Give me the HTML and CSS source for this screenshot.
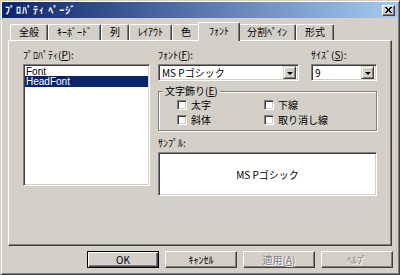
FILE: index.html
```html
<!DOCTYPE html>
<html lang="ja">
<head>
  <meta charset="UTF-8" />
  <title>ﾌﾟﾛﾊﾟﾃｨ ﾍﾟｰｼﾞ</title>
  <link rel="stylesheet" href="styles.css">
</head>
<body>

  <div class="window">
    <div class="titlebar">
      <span class="title">ﾌﾟﾛﾊﾟﾃｨ ﾍﾟｰｼﾞ</span>
      <span class="close-btn">
        <svg width="7" height="6" viewBox="0 0 7 6"><path d="M0 0 L6 6 M1 0 L7 6 M6 0 L0 6 M7 0 L1 6" stroke="#000" stroke-width="1" shape-rendering="crispEdges"/></svg>
      </span>
    </div>

    <div class="tabs">
      <div class="tab">全般</div>
      <div class="tab">ｷｰﾎﾞｰﾄﾞ</div>
      <div class="tab">列</div>
      <div class="tab">ﾚｲｱｳﾄ</div>
      <div class="tab">色</div>
      <div class="tab active">ﾌｫﾝﾄ</div>
      <div class="tab">分割ﾍﾟｲﾝ</div>
      <div class="tab">形式</div>
    </div>

    <div class="panel">
      <div class="col-left">
        <div class="label">ﾌﾟﾛﾊﾟﾃｨ(<u>P</u>):</div>
        <div class="listbox">
          <div class="list-item">Font</div>
          <div class="list-item selected">HeadFont</div>
        </div>
      </div>

      <div class="col-right">
        <div class="fields">
          <div class="field field-font">
            <div class="label">ﾌｫﾝﾄ(<u>F</u>):</div>
            <div class="combo">
              <span class="combo-text">MS Pゴシック</span>
              <span class="combo-btn"><span class="arrow"></span></span>
            </div>
          </div>
          <div class="field field-size">
            <div class="label">ｻｲｽﾞ(<u>S</u>):</div>
            <div class="combo">
              <span class="combo-text">9</span>
              <span class="combo-btn"><span class="arrow"></span></span>
            </div>
          </div>
        </div>

        <fieldset class="group">
          <legend>文字飾り(<u>E</u>)</legend>
          <div class="checks">
            <div class="check"><span class="check-box"></span>太字</div>
            <div class="check"><span class="check-box"></span>下線</div>
            <div class="check"><span class="check-box"></span>斜体</div>
            <div class="check"><span class="check-box"></span>取り消し線</div>
          </div>
        </fieldset>

        <div class="label sample-label">ｻﾝﾌﾟﾙ:</div>
        <div class="sample">MS Pゴシック</div>
      </div>
    </div>

    <div class="buttons">
      <button class="btn default">OK</button>
      <button class="btn">ｷｬﾝｾﾙ</button>
      <button class="btn disabled">適用(<u>A</u>)</button>
      <button class="btn disabled">ﾍﾙﾌﾟ</button>
    </div>
  </div>

</body>
</html>
```

FILE: styles.css
```css
body {
  margin: 0;
  background: #d4d0c8;
  font-family: "Noto Sans CJK JP", sans-serif;
  font-size: 10px;
  color: #000;
}

u {
  text-decoration: underline;
}

.window {
  width: 400px;
  height: 275px;
  box-sizing: border-box;
  border: 1px solid;
  border-color: #d4d0c8 #404040 #404040 #d4d0c8;
  box-shadow: inset 1px 1px #fff, inset -1px -1px #808080;
  padding: 1px;
  display: flex;
  flex-direction: column;
  background: #d4d0c8;
}

/* title bar */
.titlebar {
  height: 16px;
  flex-shrink: 0;
  background: linear-gradient(to right, #0a246a, #a6caf0);
  display: flex;
  align-items: center;
  justify-content: space-between;
  padding: 0 3px 0 3px;
  color: #fff;
  font-weight: bold;
  line-height: 12px;
}

.title {
  letter-spacing: 1px;
}

.close-btn {
  width: 13px;
  height: 11px;
  box-sizing: border-box;
  background: #d4d0c8;
  border: 1px solid;
  border-color: #fff #404040 #404040 #fff;
  box-shadow: inset -1px -1px #808080;
  display: flex;
  align-items: center;
  justify-content: center;
}

.close-btn svg {
  display: block;
}

/* tabs */
.tabs {
  display: flex;
  align-items: flex-end;
  height: 18px;
  margin: 4px 6px 0;
  padding-left: 2px;
  flex-shrink: 0;
}

.tab {
  height: 16px;
  box-sizing: border-box;
  border: 1px solid;
  border-color: #fff #404040 transparent #fff;
  border-bottom: none;
  border-radius: 2px 2px 0 0;
  box-shadow: inset -1px 0 #808080;
  padding: 0 8px;
  line-height: 14px;
  white-space: nowrap;
}

.tab.active {
  height: 19px;
  margin: 0 -2px -1px;
  padding: 0 10px;
  position: relative;
  z-index: 1;
  background: #d4d0c8;
  line-height: 16px;
}

/* panel */
.panel {
  height: 206px;
  box-sizing: border-box;
  margin: 0 6px;
  border: 1px solid;
  border-color: #fff #404040 #404040 #fff;
  box-shadow: inset -1px -1px #808080;
  padding: 8px 14px 0 14px;
  display: flex;
  gap: 8px;
  flex-shrink: 0;
}

.label {
  line-height: 12px;
  height: 12px;
  margin-bottom: 3px;
  white-space: nowrap;
}

.col-left {
  width: 127px;
}

.listbox {
  margin-top: 1px;
  height: 122px;
  box-sizing: border-box;
  background: #fff;
  border: 1px solid;
  border-color: #808080 #fff #fff #808080;
  box-shadow: inset 1px 1px #404040, inset -1px -1px #d4d0c8;
  padding: 1px;
}

.list-item {
  height: 11px;
  line-height: 11px;
  padding-left: 1px;
  font-family: "Liberation Sans", Arial, sans-serif;
}

.list-item:first-child {
  height: 10px;
}

.list-item.selected {
  background: #0a246a;
  color: #fff;
}

.col-right {
  width: 219px;
}

.fields {
  display: flex;
  gap: 12px;
}

.field-font {
  width: 141px;
}

.field-size {
  width: 66px;
}

.combo {
  height: 17px;
  box-sizing: border-box;
  background: #fff;
  border: 1px solid;
  border-color: #808080 #fff #fff #808080;
  box-shadow: inset 1px 1px #404040, inset -1px -1px #d4d0c8;
  padding: 2px;
  display: flex;
  align-items: center;
  justify-content: space-between;
}

.combo-text {
  line-height: 12px;
  padding-left: 1px;
}

.combo-btn {
  width: 13px;
  height: 13px;
  box-sizing: border-box;
  background: #d4d0c8;
  border: 1px solid;
  border-color: #d4d0c8 #404040 #404040 #d4d0c8;
  box-shadow: inset 1px 1px #fff, inset -1px -1px #808080;
  display: flex;
  align-items: center;
  justify-content: center;
}

.arrow {
  width: 0;
  height: 0;
  border-left: 3px solid transparent;
  border-right: 3px solid transparent;
  border-top: 3px solid #000;
  margin-top: 1px;
}

/* group box */
.group {
  margin: 4px 0 0;
  padding: 2px 0 4px 4px;
  min-width: 0;
  border: 1px solid #808080;
  box-shadow: inset 1px 1px #fff, 1px 1px #fff;
}

.group legend {
  padding: 0 2px;
  line-height: 12px;
  background: #d4d0c8;
}

.checks {
  display: grid;
  grid-template-columns: 87px auto;
  row-gap: 3px;
  margin-left: 14px;
}

.check {
  display: flex;
  align-items: center;
  gap: 4px;
  height: 12px;
  line-height: 12px;
}

.check-box {
  width: 10px;
  height: 10px;
  box-sizing: border-box;
  background: #fff;
  border: 1px solid;
  border-color: #808080 #fff #fff #808080;
  box-shadow: inset 1px 1px #404040, inset -1px -1px #d4d0c8;
}

.sample-label {
  margin-top: 6px;
}

.sample {
  height: 44px;
  box-sizing: border-box;
  background: #fff;
  border: 1px solid;
  border-color: #808080 #fff #fff #808080;
  box-shadow: inset 1px 1px #404040, inset -1px -1px #d4d0c8;
  display: flex;
  align-items: center;
  justify-content: center;
}

/* buttons */
.buttons {
  display: flex;
  justify-content: flex-end;
  gap: 6px;
  margin-top: 5px;
  padding-right: 5px;
}

.btn {
  width: 72px;
  height: 17px;
  box-sizing: border-box;
  font: inherit;
  line-height: 12px;
  padding: 0;
  color: #000;
  background: #d4d0c8;
  border: 1px solid;
  border-color: #fff #404040 #404040 #fff;
  box-shadow: inset -1px -1px #808080;
  border-radius: 0;
}

.btn.default {
  border-color: #000;
  box-shadow: inset 1px 1px #fff, inset -1px -1px #404040, inset -2px -2px #808080;
}

.btn.disabled {
  color: #808080;
  text-shadow: 1px 1px #fff;
}
```
